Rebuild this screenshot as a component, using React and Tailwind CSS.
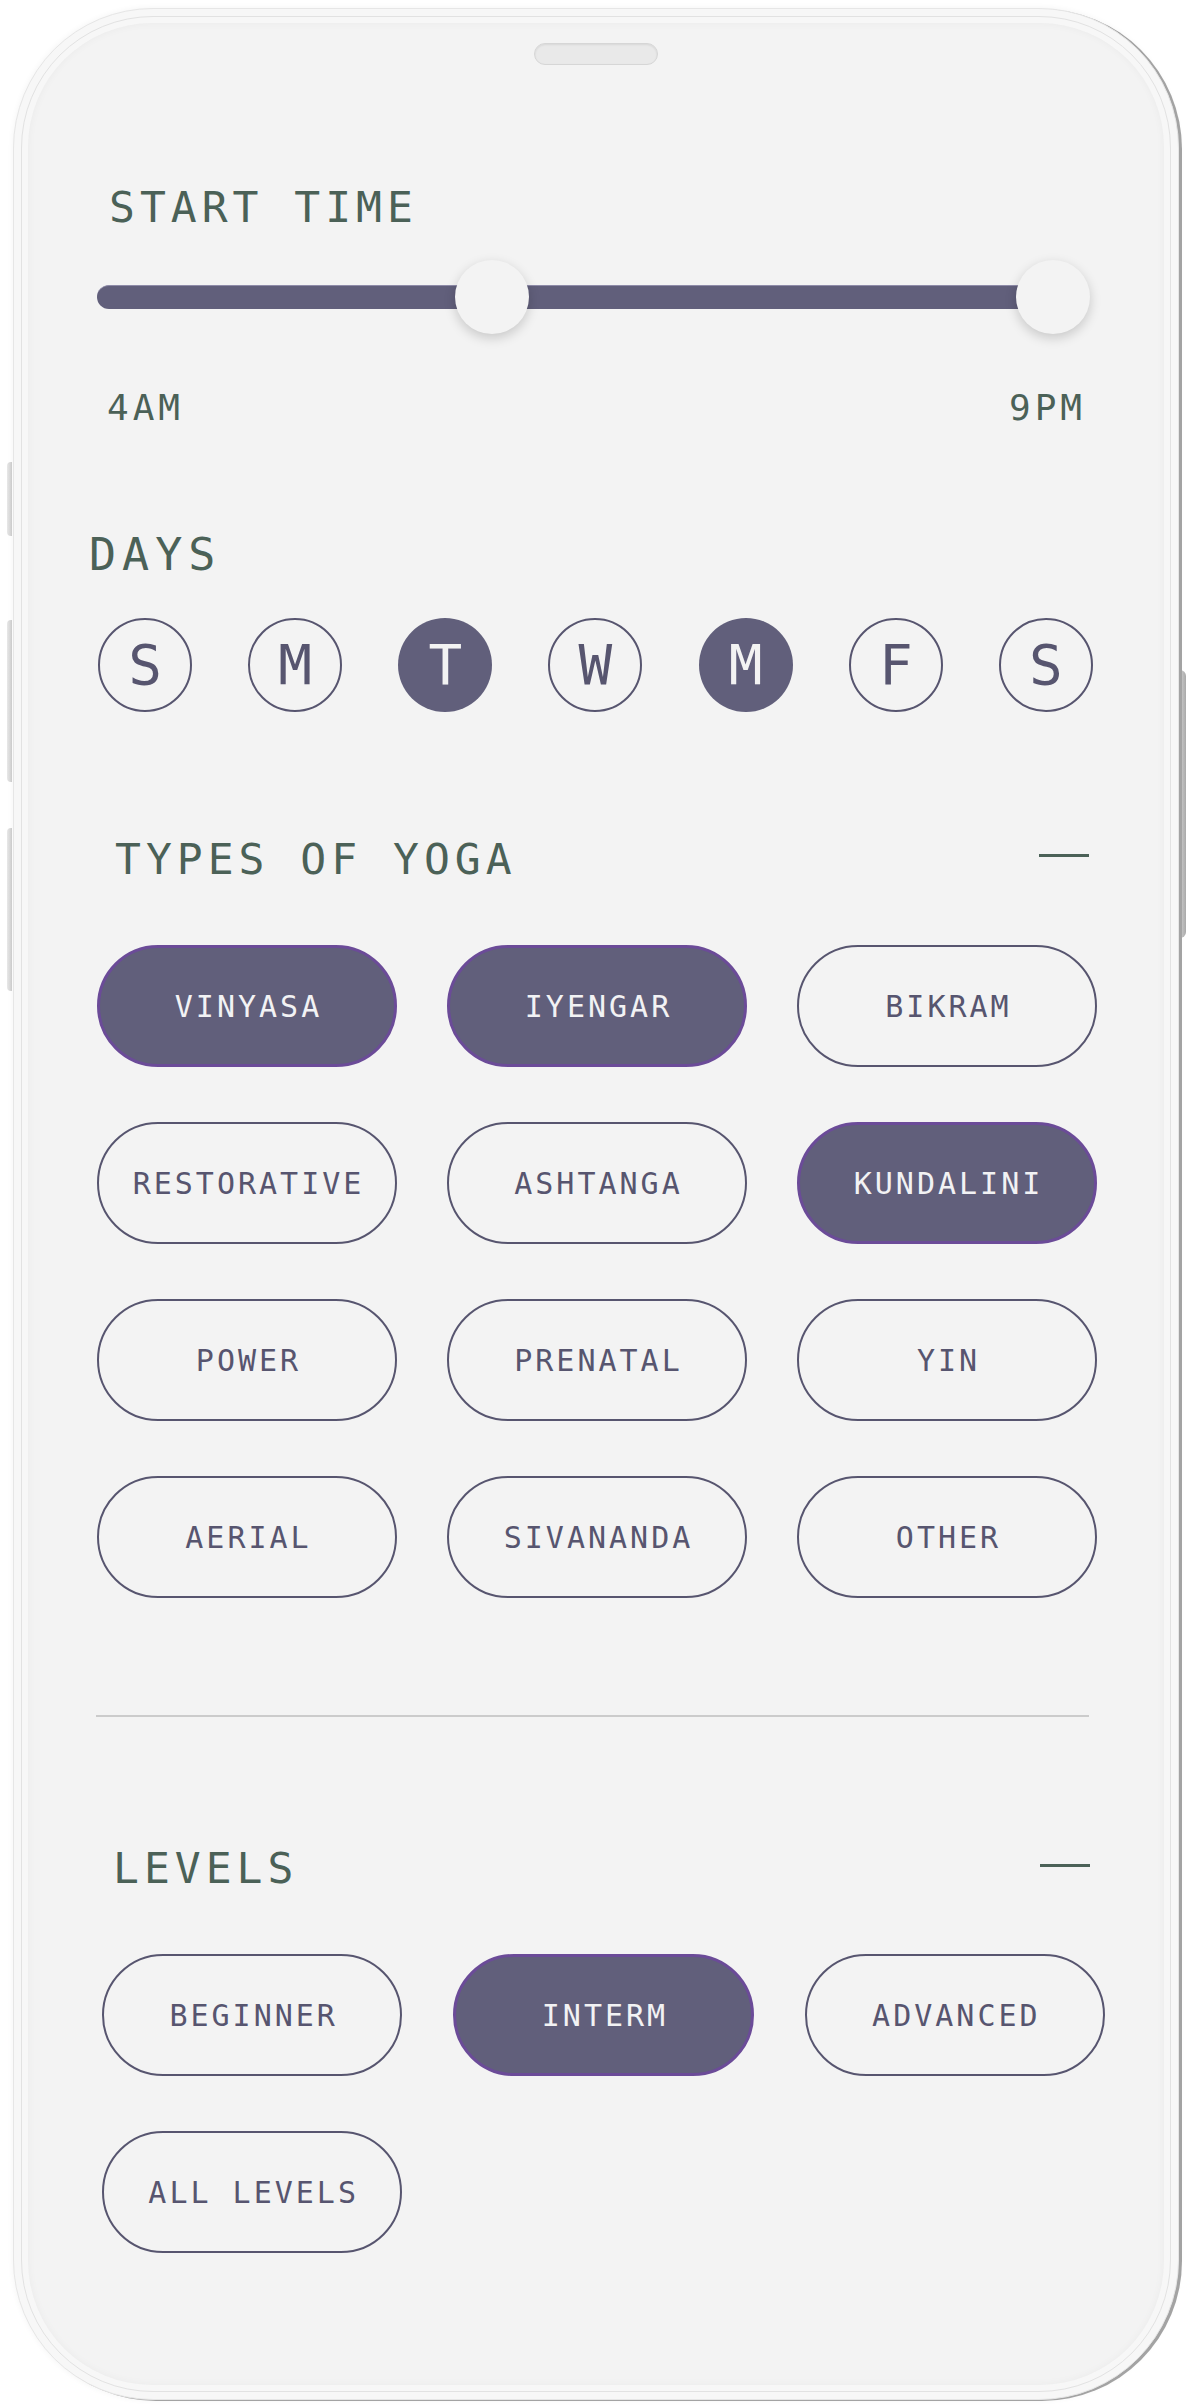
import React, { useState } from "react";

const MONO = "font-['DejaVu_Sans_Mono','Liberation_Mono',monospace]";

const YOGA_TYPES = [
  "VINYASA",
  "IYENGAR",
  "BIKRAM",
  "RESTORATIVE",
  "ASHTANGA",
  "KUNDALINI",
  "POWER",
  "PRENATAL",
  "YIN",
  "AERIAL",
  "SIVANANDA",
  "OTHER",
];

const LEVELS = ["BEGINNER", "INTERM", "ADVANCED", "ALL LEVELS"];

const DAYS = ["S", "M", "T", "W", "M", "F", "S"];

// Pill toggle used for yoga types and levels
function Pill({ label, active, onClick }) {
  return (
    <button
      onClick={onClick}
      className={
        active
          ? `h-[122px] rounded-full border-[3px] border-[#6b4b98] bg-[#615f7b] text-[#f2f2f4] text-[30px] tracking-[3px] pl-[3px] ${MONO}`
          : `h-[122px] rounded-full border-2 border-[#57556f] bg-transparent text-[#57556f] text-[30px] tracking-[3px] pl-[3px] ${MONO}`
      }
    >
      {label}
    </button>
  );
}

function SectionHeader({ title, dash, dashTop, className }) {
  return (
    <div className={`flex items-start justify-between ${className}`}>
      <h2 className={`text-[43px] leading-[43px] tracking-[5px] text-[#4b6157] ${MONO}`}>
        {title}
      </h2>
      {dash && <div className={`w-[50px] h-[3px] bg-[#4b6157] ${dashTop}`} />}
    </div>
  );
}

export default function App() {
  const [days, setDays] = useState([false, false, true, false, true, false, false]);
  const [types, setTypes] = useState(["VINYASA", "IYENGAR", "KUNDALINI"]);
  const [level, setLevel] = useState("INTERM");

  const toggleType = (t) =>
    setTypes((prev) => (prev.includes(t) ? prev.filter((x) => x !== t) : [...prev, t]));

  return (
    <div className="relative w-[1190px] h-[2406px] bg-white overflow-hidden">
      {/* side buttons */}
      <div className="absolute left-[7px] top-[462px] w-[5px] h-[74px] rounded-l-sm bg-gradient-to-r from-[#e8e8e8] to-[#cfcfcf]" />
      <div className="absolute left-[7px] top-[620px] w-[5px] h-[162px] rounded-l-sm bg-gradient-to-r from-[#e8e8e8] to-[#cfcfcf]" />
      <div className="absolute left-[7px] top-[828px] w-[5px] h-[163px] rounded-l-sm bg-gradient-to-r from-[#e8e8e8] to-[#cfcfcf]" />
      <div className="absolute left-[1177px] top-[670px] w-[9px] h-[268px] rounded-r-md bg-gradient-to-r from-[#e4e4e4] to-[#a9a9a9]" />

      {/* phone body */}
      <div className="relative ml-[13px] mt-[8px] w-[1166px] h-[2392px] rounded-[140px] bg-[#f7f7f7] border border-[#e6e6e6] p-[7px] shadow-[3px_1px_0_#a3a3a3,0_0_6px_rgba(0,0,0,0.05)]">
        <div className="w-full h-full rounded-[132px] border border-[#e2e2e2] p-[6px]">
          <div className="w-full h-full rounded-[124px] bg-[#f3f3f3] shadow-[inset_0_0_8px_rgba(0,0,0,0.04)] flex flex-col">
            {/* speaker */}
            <div className="mx-auto mt-[20px] w-[124px] h-[22px] rounded-full bg-[#e9e9e9] border border-[#d6d6d6] shadow-[inset_0_1px_2px_rgba(0,0,0,0.08)]" />

            {/* start time */}
            <SectionHeader title="START TIME" className="mt-[121px] ml-[81px] w-[400px]" />

            <div className="relative mt-[31px] ml-[69px] w-[993px] h-[74px] flex items-center">
              <div className="w-[956px] h-[24px] rounded-full bg-[#615f7b] border-t border-[#8e8ba8]" />
              <div className="absolute left-[358px] top-0 w-[74px] h-[74px] rounded-full bg-[#f3f3f3] shadow-[0_4px_12px_rgba(0,0,0,0.18)]" />
              <div className="absolute left-[919px] top-0 w-[74px] h-[74px] rounded-full bg-[#f3f3f3] shadow-[0_4px_12px_rgba(0,0,0,0.18)]" />
            </div>

            <div className={`mt-[56px] ml-[79px] w-[979px] flex justify-between text-[36px] leading-[36px] tracking-[4px] text-[#4b6157] ${MONO}`}>
              <span>4AM</span>
              <span>9PM</span>
            </div>

            {/* days */}
            <h2 className={`mt-[106px] ml-[61px] text-[45px] leading-[45px] tracking-[6px] text-[#4b6157] ${MONO}`}>
              DAYS
            </h2>
            <div className="mt-[41px] ml-[70px] w-[995px] flex justify-between">
              {DAYS.map((d, i) => (
                <button
                  key={i}
                  onClick={() => setDays((prev) => prev.map((v, j) => (j === i ? !v : v)))}
                  className={
                    days[i]
                      ? `w-[94px] h-[94px] rounded-full bg-[#615f7b] text-[#f3f3f3] text-[56px] leading-none flex items-center justify-center ${MONO}`
                      : `w-[94px] h-[94px] rounded-full border-2 border-[#57556f] text-[#57556f] text-[56px] leading-none flex items-center justify-center ${MONO}`
                  }
                >
                  {d}
                </button>
              ))}
            </div>

            {/* types of yoga */}
            <SectionHeader
              title="TYPES OF YOGA"
              dash
              dashTop="mt-[16px]"
              className="mt-[126px] ml-[87px] w-[974px]"
            />
            <div className="mt-[64px] ml-[69px] w-[1000px] grid grid-cols-3 gap-x-[50px] gap-y-[55px]">
              {YOGA_TYPES.map((t) => (
                <Pill key={t} label={t} active={types.includes(t)} onClick={() => toggleType(t)} />
              ))}
            </div>

            <div className="mt-[117px] ml-[68px] w-[993px] h-[2px] bg-[#cbcbcb]" />

            {/* levels */}
            <SectionHeader
              title="LEVELS"
              dash
              dashTop="mt-[17px]"
              className="mt-[130px] ml-[85px] w-[977px]"
            />
            <div className="mt-[64px] ml-[74px] w-[1003px] grid grid-cols-3 gap-x-[51px] gap-y-[55px]">
              {LEVELS.map((l) => (
                <Pill key={l} label={l} active={level === l} onClick={() => setLevel(l)} />
              ))}
            </div>
          </div>
        </div>
      </div>
    </div>
  );
}
